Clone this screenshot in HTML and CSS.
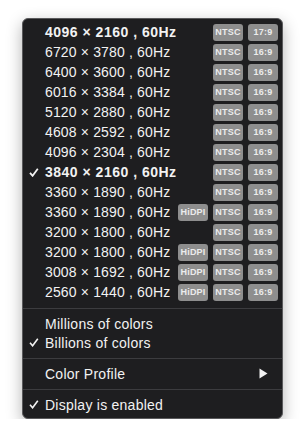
FILE: index.html
```html
<!DOCTYPE html>
<html>
<head>
    <title>Display Menu</title>
    <link rel="stylesheet" href="styles.css">
</head>
<body>
    <div class="menu">
        <div class="row bold"><span class="check"></span><span class="label">4096 × 2160 , 60Hz</span><span class="tags"><span class="tag">NTSC</span><span class="tag">17:9</span></span></div>
        <div class="row"><span class="check"></span><span class="label">6720 × 3780 , 60Hz</span><span class="tags"><span class="tag">NTSC</span><span class="tag">16:9</span></span></div>
        <div class="row"><span class="check"></span><span class="label">6400 × 3600 , 60Hz</span><span class="tags"><span class="tag">NTSC</span><span class="tag">16:9</span></span></div>
        <div class="row"><span class="check"></span><span class="label">6016 × 3384 , 60Hz</span><span class="tags"><span class="tag">NTSC</span><span class="tag">16:9</span></span></div>
        <div class="row"><span class="check"></span><span class="label">5120 × 2880 , 60Hz</span><span class="tags"><span class="tag">NTSC</span><span class="tag">16:9</span></span></div>
        <div class="row"><span class="check"></span><span class="label">4608 × 2592 , 60Hz</span><span class="tags"><span class="tag">NTSC</span><span class="tag">16:9</span></span></div>
        <div class="row"><span class="check"></span><span class="label">4096 × 2304 , 60Hz</span><span class="tags"><span class="tag">NTSC</span><span class="tag">16:9</span></span></div>
        <div class="row bold"><span class="check"><svg width="10" height="9" viewBox="0 0 10 9"><polyline points="1,4.8 3.6,7.8 8.8,0.8" fill="none" stroke="#f2f2f2" stroke-width="1.8"/></svg></span><span class="label">3840 × 2160 , 60Hz</span><span class="tags"><span class="tag">NTSC</span><span class="tag">16:9</span></span></div>
        <div class="row"><span class="check"></span><span class="label">3360 × 1890 , 60Hz</span><span class="tags"><span class="tag">NTSC</span><span class="tag">16:9</span></span></div>
        <div class="row"><span class="check"></span><span class="label">3360 × 1890 , 60Hz</span><span class="tags"><span class="tag">HiDPI</span><span class="tag">NTSC</span><span class="tag">16:9</span></span></div>
        <div class="row"><span class="check"></span><span class="label">3200 × 1800 , 60Hz</span><span class="tags"><span class="tag">NTSC</span><span class="tag">16:9</span></span></div>
        <div class="row"><span class="check"></span><span class="label">3200 × 1800 , 60Hz</span><span class="tags"><span class="tag">HiDPI</span><span class="tag">NTSC</span><span class="tag">16:9</span></span></div>
        <div class="row"><span class="check"></span><span class="label">3008 × 1692 , 60Hz</span><span class="tags"><span class="tag">HiDPI</span><span class="tag">NTSC</span><span class="tag">16:9</span></span></div>
        <div class="row"><span class="check"></span><span class="label">2560 × 1440 , 60Hz</span><span class="tags"><span class="tag">HiDPI</span><span class="tag">NTSC</span><span class="tag">16:9</span></span></div>

        <div class="sep"></div>
        <div class="row item"><span class="check"></span><span class="label">Millions of colors</span></div>
        <div class="row item"><span class="check"><svg width="10" height="9" viewBox="0 0 10 9"><polyline points="1,4.8 3.6,7.8 8.8,0.8" fill="none" stroke="#f2f2f2" stroke-width="1.6"/></svg></span><span class="label">Billions of colors</span></div>

        <div class="sep"></div>
        <div class="row item"><span class="check"></span><span class="label">Color Profile</span><span class="arrow"><svg width="9" height="11" viewBox="0 0 9 11"><polygon points="0.5,0.5 8.5,5.5 0.5,10.5" fill="#f2f2f2"/></svg></span></div>

        <div class="sep"></div>
        <div class="row item"><span class="check"><svg width="10" height="9" viewBox="0 0 10 9"><polyline points="1,4.8 3.6,7.8 8.8,0.8" fill="none" stroke="#f2f2f2" stroke-width="1.6"/></svg></span><span class="label">Display is enabled</span></div>
    </div>
</body>
</html>
```

FILE: styles.css
```css
body {
    margin: 0;
    background-color: white;
    font-family: "Liberation Sans", Arial, sans-serif;
}
.menu {
    margin: 18px 0 0 22px;
    width: 259px;
    padding: 3px 0 4px 0;
    background-color: #1e1e20;
    border: 1px solid #5a5a5c;
    border-radius: 6px;
    box-shadow: 0 5px 16px rgba(0, 0, 0, 0.3);
    color: #f2f2f2;
}
.row {
    display: flex;
    align-items: center;
    height: 20px;
    font-size: 14px;
    letter-spacing: 0.15px;
    padding-right: 4px;
}
.row.item {
    height: 19px;
    letter-spacing: 0.25px;
}
.bold .label {
    font-weight: bold;
    letter-spacing: 0.5px;
}
.check {
    display: flex;
    align-items: center;
    width: 16px;
    padding-left: 6px;
    height: 100%;
}
.label {
    white-space: nowrap;
}
.tags {
    display: flex;
    gap: 5px;
    margin-left: auto;
}
.tag {
    width: 30px;
    height: 17px;
    line-height: 17px;
    text-align: center;
    background-color: #8e8e8e;
    color: #ececec;
    border-radius: 3px;
    font-size: 9px;
    font-weight: bold;
    letter-spacing: 0.2px;
}
.arrow {
    display: flex;
    margin-left: auto;
    margin-right: 10px;
}
.sep {
    height: 1px;
    background-color: #3c3c3f;
    margin: 6px 0 5px 0;
}
```
